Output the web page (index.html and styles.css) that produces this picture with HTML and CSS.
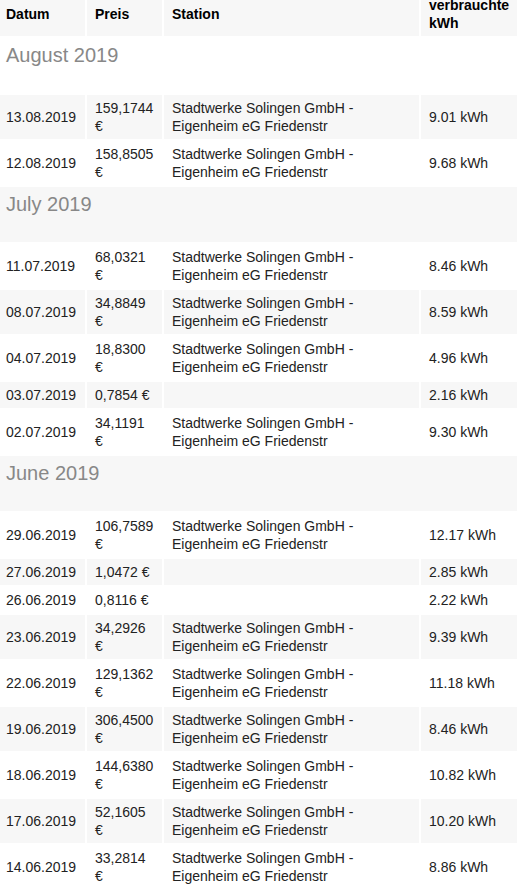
FILE: index.html
```html
<!DOCTYPE html>
<html lang="de">
<head>
    <meta charset="UTF-8">
    <meta name="viewport" content="width=device-width, initial-scale=1.0">
    <title>Ladevorgänge</title>
    <link rel="stylesheet" href="styles.css">
</head>
<body>
    <table class="sessions">
        <colgroup>
            <col class="col-date">
            <col class="col-price">
            <col class="col-station">
            <col class="col-kwh">
        </colgroup>
        <thead>
            <tr>
                <th>Datum</th>
                <th>Preis</th>
                <th>Station</th>
                <th>verbrauchte kWh</th>
            </tr>
        </thead>
        <tbody>
            <tr class="month"><td colspan="4"><h3>August 2019</h3></td></tr>
            <tr><td>13.08.2019</td><td>159,1744 €</td><td>Stadtwerke Solingen GmbH - Eigenheim eG Friedenstr</td><td>9.01 kWh</td></tr>
            <tr><td>12.08.2019</td><td>158,8505 €</td><td>Stadtwerke Solingen GmbH - Eigenheim eG Friedenstr</td><td>9.68 kWh</td></tr>

            <tr class="month"><td colspan="4"><h3>July 2019</h3></td></tr>
            <tr><td>11.07.2019</td><td>68,0321 €</td><td>Stadtwerke Solingen GmbH - Eigenheim eG Friedenstr</td><td>8.46 kWh</td></tr>
            <tr><td>08.07.2019</td><td>34,8849 €</td><td>Stadtwerke Solingen GmbH - Eigenheim eG Friedenstr</td><td>8.59 kWh</td></tr>
            <tr><td>04.07.2019</td><td>18,8300 €</td><td>Stadtwerke Solingen GmbH - Eigenheim eG Friedenstr</td><td>4.96 kWh</td></tr>
            <tr><td>03.07.2019</td><td>0,7854 €</td><td></td><td>2.16 kWh</td></tr>
            <tr><td>02.07.2019</td><td>34,1191 €</td><td>Stadtwerke Solingen GmbH - Eigenheim eG Friedenstr</td><td>9.30 kWh</td></tr>

            <tr class="month"><td colspan="4"><h3>June 2019</h3></td></tr>
            <tr><td>29.06.2019</td><td>106,7589 €</td><td>Stadtwerke Solingen GmbH - Eigenheim eG Friedenstr</td><td>12.17 kWh</td></tr>
            <tr><td>27.06.2019</td><td>1,0472 €</td><td></td><td>2.85 kWh</td></tr>
            <tr><td>26.06.2019</td><td>0,8116 €</td><td></td><td>2.22 kWh</td></tr>
            <tr><td>23.06.2019</td><td>34,2926 €</td><td>Stadtwerke Solingen GmbH - Eigenheim eG Friedenstr</td><td>9.39 kWh</td></tr>
            <tr><td>22.06.2019</td><td>129,1362 €</td><td>Stadtwerke Solingen GmbH - Eigenheim eG Friedenstr</td><td>11.18 kWh</td></tr>
            <tr><td>19.06.2019</td><td>306,4500 €</td><td>Stadtwerke Solingen GmbH - Eigenheim eG Friedenstr</td><td>8.46 kWh</td></tr>
            <tr><td>18.06.2019</td><td>144,6380 €</td><td>Stadtwerke Solingen GmbH - Eigenheim eG Friedenstr</td><td>10.82 kWh</td></tr>
            <tr><td>17.06.2019</td><td>52,1605 €</td><td>Stadtwerke Solingen GmbH - Eigenheim eG Friedenstr</td><td>10.20 kWh</td></tr>
            <tr><td>14.06.2019</td><td>33,2814 €</td><td>Stadtwerke Solingen GmbH - Eigenheim eG Friedenstr</td><td>8.86 kWh</td></tr>
        </tbody>
    </table>
</body>
</html>
```

FILE: styles.css
```css
body {
    font-family: "Liberation Sans", Arial, sans-serif;
    font-size: 14px;
    line-height: 18px;
    color: #222;
    background-color: #fff;
    margin: 0;
    overflow: hidden;
}
/* Table (page is scrolled a little, so it starts above/left of the window) */
.sessions {
    border-collapse: separate;
    border-spacing: 2px;
    table-layout: fixed;
    width: 523px;
    margin: -10px 0 0 -4px;
}
.col-date {
    width: 87px;
}
.col-price {
    width: 75px;
}
.col-station {
    width: 255px;
}
.col-kwh {
    width: 96px;
}
th,
td {
    padding: 4px 8px;
    text-align: left;
    vertical-align: middle;
}
th {
    color: #000;
    font-weight: bold;
}
thead tr,
tbody tr:nth-child(even) {
    background-color: #f7f7f7;
}
/* Month heading rows */
.month td {
    padding: 4px 8px;
}
.month h3 {
    margin: 0 0 21px;
    font-size: 20px;
    line-height: 26px;
    font-weight: normal;
    color: #888;
}
```
